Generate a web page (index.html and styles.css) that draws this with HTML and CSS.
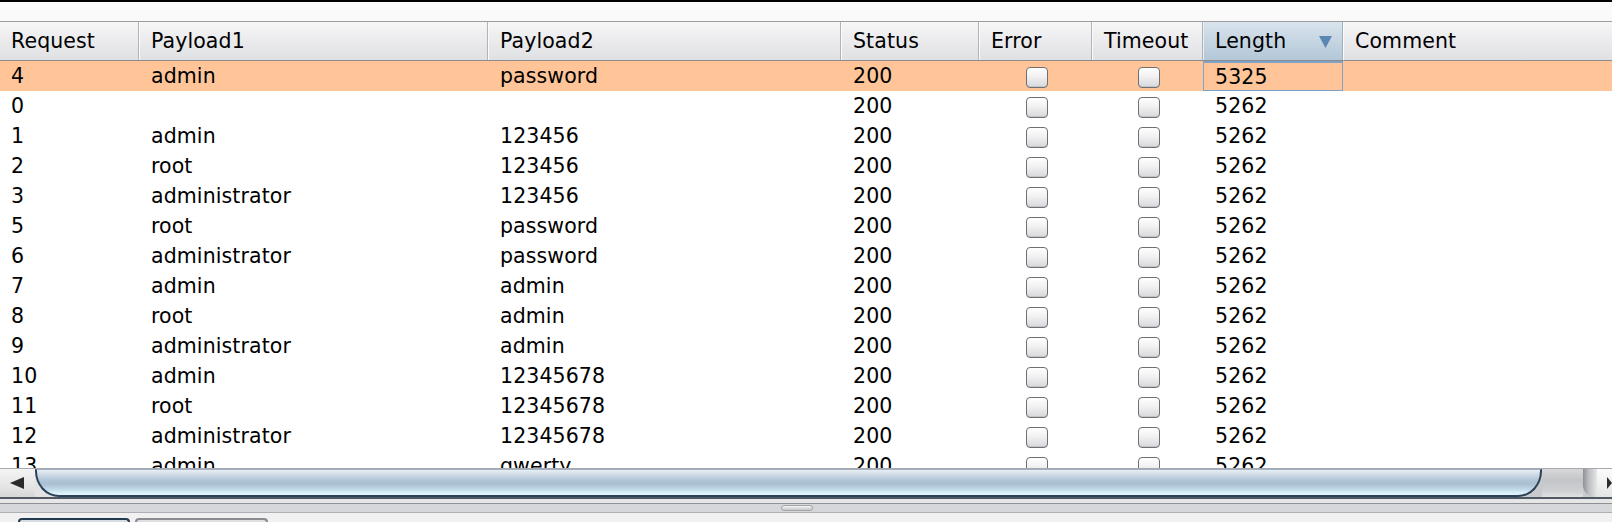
FILE: index.html
```html
<!DOCTYPE html>
<html>
<head>
<meta charset="utf-8">
<link rel="stylesheet" href="styles.css">
</head>
<body>
<div class="app">
  <div class="topbar"></div>
  <div class="topgap"></div>
  <div class="viewport">
    <div class="row head">
      <div class="hc">Request</div>
      <div class="hc">Payload1</div>
      <div class="hc">Payload2</div>
      <div class="hc">Status</div>
      <div class="hc">Error</div>
      <div class="hc">Timeout</div>
      <div class="hc sorted"><span>Length</span><svg class="sortarrow" width="13" height="12" viewBox="0 0 13 12"><polygon points="0,0 13,0 6.5,12" fill="#5b87b5"/></svg></div>
      <div class="hc last">Comment</div>
    </div>
    <div class="row data sel">
      <div class="c">4</div><div class="c">admin</div><div class="c">password</div><div class="c">200</div>
      <div class="c cb"><span class="box"></span></div><div class="c cb"><span class="box"></span></div>
      <div class="c focus">5325</div><div class="c"></div>
    </div>
    <div class="row data">
      <div class="c">0</div><div class="c"></div><div class="c"></div><div class="c">200</div>
      <div class="c cb"><span class="box"></span></div><div class="c cb"><span class="box"></span></div>
      <div class="c">5262</div><div class="c"></div>
    </div>
    <div class="row data">
      <div class="c">1</div><div class="c">admin</div><div class="c">123456</div><div class="c">200</div>
      <div class="c cb"><span class="box"></span></div><div class="c cb"><span class="box"></span></div>
      <div class="c">5262</div><div class="c"></div>
    </div>
    <div class="row data">
      <div class="c">2</div><div class="c">root</div><div class="c">123456</div><div class="c">200</div>
      <div class="c cb"><span class="box"></span></div><div class="c cb"><span class="box"></span></div>
      <div class="c">5262</div><div class="c"></div>
    </div>
    <div class="row data">
      <div class="c">3</div><div class="c">administrator</div><div class="c">123456</div><div class="c">200</div>
      <div class="c cb"><span class="box"></span></div><div class="c cb"><span class="box"></span></div>
      <div class="c">5262</div><div class="c"></div>
    </div>
    <div class="row data">
      <div class="c">5</div><div class="c">root</div><div class="c">password</div><div class="c">200</div>
      <div class="c cb"><span class="box"></span></div><div class="c cb"><span class="box"></span></div>
      <div class="c">5262</div><div class="c"></div>
    </div>
    <div class="row data">
      <div class="c">6</div><div class="c">administrator</div><div class="c">password</div><div class="c">200</div>
      <div class="c cb"><span class="box"></span></div><div class="c cb"><span class="box"></span></div>
      <div class="c">5262</div><div class="c"></div>
    </div>
    <div class="row data">
      <div class="c">7</div><div class="c">admin</div><div class="c">admin</div><div class="c">200</div>
      <div class="c cb"><span class="box"></span></div><div class="c cb"><span class="box"></span></div>
      <div class="c">5262</div><div class="c"></div>
    </div>
    <div class="row data">
      <div class="c">8</div><div class="c">root</div><div class="c">admin</div><div class="c">200</div>
      <div class="c cb"><span class="box"></span></div><div class="c cb"><span class="box"></span></div>
      <div class="c">5262</div><div class="c"></div>
    </div>
    <div class="row data">
      <div class="c">9</div><div class="c">administrator</div><div class="c">admin</div><div class="c">200</div>
      <div class="c cb"><span class="box"></span></div><div class="c cb"><span class="box"></span></div>
      <div class="c">5262</div><div class="c"></div>
    </div>
    <div class="row data">
      <div class="c">10</div><div class="c">admin</div><div class="c">12345678</div><div class="c">200</div>
      <div class="c cb"><span class="box"></span></div><div class="c cb"><span class="box"></span></div>
      <div class="c">5262</div><div class="c"></div>
    </div>
    <div class="row data">
      <div class="c">11</div><div class="c">root</div><div class="c">12345678</div><div class="c">200</div>
      <div class="c cb"><span class="box"></span></div><div class="c cb"><span class="box"></span></div>
      <div class="c">5262</div><div class="c"></div>
    </div>
    <div class="row data">
      <div class="c">12</div><div class="c">administrator</div><div class="c">12345678</div><div class="c">200</div>
      <div class="c cb"><span class="box"></span></div><div class="c cb"><span class="box"></span></div>
      <div class="c">5262</div><div class="c"></div>
    </div>
    <div class="row data">
      <div class="c">13</div><div class="c">admin</div><div class="c">qwerty</div><div class="c">200</div>
      <div class="c cb"><span class="box"></span></div><div class="c cb"><span class="box"></span></div>
      <div class="c">5262</div><div class="c"></div>
    </div>
  </div>
  <div class="hscroll">
    <div class="sb-left"><svg width="14" height="12" viewBox="0 0 14 12"><polygon points="14,0 14,12 0,6" fill="#2a2a2a"/></svg></div>
    <div class="sb-rail">
      <div class="sb-thumb"></div>
      <div class="sb-track"></div>
      <div class="sb-cap"></div>
    </div>
    <div class="sb-right"><svg width="15" height="12" viewBox="0 0 15 12"><polygon points="10,0 10,12 15,6" fill="#2a2a2a"/></svg></div>
  </div>
  <div class="darkline"></div>
  <div class="lightstrip"></div>
  <div class="splitter"><span class="grip"></span></div>
  <div class="bottom">
    <span class="tab tab-active"></span>
    <span class="tab"></span>
  </div>
</div>
</body>
</html>
```
FILE: styles.css
```css
html, body {
  margin: 0;
  padding: 0;
  background: #ffffff;
}
.app {
  width: 1612px;
  height: 522px;
  overflow: hidden;
  display: flex;
  flex-direction: column;
  font-family: "DejaVu Sans", Verdana, sans-serif;
  font-size: 20.5px;
  letter-spacing: 0.1px;
  color: #000;
}
.topbar {
  height: 2px;
  background: #000;
  flex: none;
}
.topgap {
  height: 19px;
  background: #fafafa;
  flex: none;
}
.viewport {
  height: 447px;
  flex: none;
  overflow: hidden;
  background: #fff;
}
.row {
  display: grid;
  grid-template-columns: 139px 349px 353px 138px 113px 111px 140px 1fr;
}
.head {
  height: 40px;
  box-sizing: border-box;
  border-top: 1px solid #9d9d9f;
  border-bottom: 1px solid #8c8c8e;
  background: linear-gradient(#f6f6f7 0%, #ebebed 50%, #dfe0e3 100%);
}
.hc {
  line-height: 38px;
  padding-left: 12px;
  border-right: 1px solid #b3b3b6;
  box-shadow: inset 1px 0 0 #fbfbfb;
  white-space: nowrap;
}
.hc:first-child {
  padding-left: 11px;
  box-shadow: none;
}
.hc.last {
  border-right: none;
}
.hc.sorted {
  display: flex;
  align-items: center;
  justify-content: space-between;
  padding-right: 10px;
  background: linear-gradient(#d9e4ed 0%, #c5d5e2 50%, #b3c7d7 100%);
  box-shadow: inset 1px 0 0 #e6eef4;
  border-right: 1px solid #9fb0bf;
}
.sortarrow {
  display: block;
  margin-top: 1px;
}
.data {
  height: 30px;
}
.sel {
  background: #ffc599;
}
.c {
  line-height: 30px;
  padding-left: 12px;
  white-space: nowrap;
  overflow: hidden;
}
.c:first-child {
  padding-left: 11px;
}
.c.cb {
  padding-left: 0;
  display: flex;
  align-items: center;
  justify-content: center;
}
.box {
  display: block;
  width: 20px;
  height: 19px;
  margin-left: 3px;
  margin-top: 2px;
  border: 1.5px solid #6f7073;
  border-radius: 4px;
  background: linear-gradient(#ffffff 0%, #f1f1f2 45%, #d7d8db 100%);
  box-shadow: inset 0 -1px 0 #c4c5c8;
}
.c.focus {
  box-sizing: border-box;
  padding-left: 11px;
  line-height: 28px;
  border: 1.5px solid #7ea3cb;
  border-top-width: 2px;
}
.hscroll {
  height: 29px;
  flex: none;
  display: flex;
  box-sizing: border-box;
  border-top: 1px solid #a7a8ab;
  background: linear-gradient(#f2f2f2, #dcdcdd);
}
.sb-left {
  width: 35px;
  flex: none;
  display: flex;
  align-items: center;
  padding-left: 10px;
  box-sizing: border-box;
  background: linear-gradient(#f4f4f4 0%, #e6e6e7 60%, #d6d6d8 100%);
}
.sb-rail {
  flex: 1;
  display: flex;
  background: linear-gradient(to right, #e3e3e4 0 30px, #c9cacd 30px);
}
.sb-thumb {
  flex: 1;
  box-sizing: border-box;
  border: 2px solid #2c4258;
  border-top: 1px solid #9fb0c0;
  border-radius: 0 0 24px 24px / 0 0 26px 26px;
  background: linear-gradient(#e8eef4 0%, #cfdbe6 18%, #b2c6d7 40%, #a9bfd2 55%, #bed6e5 75%, #dbf1fa 92%, #e4f6fc 100%);
}
.sb-track {
  width: 41px;
  flex: none;
  background: linear-gradient(#d8d8da 0%, #c4c5c8 40%, #cfd0d3 80%, #e2e2e4 100%);
}
.sb-cap {
  width: 14px;
  flex: none;
  border-radius: 0 0 0 12px;
  background: linear-gradient(to right, #8e8f93 0%, #bdbec1 40%, #e6e6e7 100%);
}
.sb-right {
  width: 15px;
  flex: none;
  display: flex;
  align-items: center;
  background: linear-gradient(#fbfbfb, #e4e4e5);
}
.darkline {
  height: 2px;
  flex: none;
  background: #4e5964;
}
.lightstrip {
  height: 4px;
  flex: none;
  background: #e6e6e7;
}
.splitter {
  height: 10px;
  flex: none;
  box-sizing: border-box;
  border-top: 1px solid #8f9096;
  border-bottom: 1px solid #aeafb3;
  background: #d6d7db;
  display: flex;
  justify-content: center;
  align-items: center;
}
.grip {
  display: block;
  width: 32px;
  height: 6px;
  margin-left: -18px;
  border-radius: 4px;
  background: linear-gradient(#f4f4f5, #c6c7cb);
  border: 1px solid #a3a4a8;
  box-sizing: border-box;
}
.bottom {
  flex: 1;
  background: #f1f1f1;
  display: flex;
  align-items: flex-end;
  gap: 5px;
  padding-left: 18px;
}
.tab {
  display: block;
  width: 133px;
  height: 4px;
  box-sizing: border-box;
  border: 2px solid #8a8b8f;
  border-bottom: none;
  border-radius: 6px 6px 0 0;
  background: #e0e0e2;
}
.tab-active {
  width: 112px;
  border-color: #243a4f;
  background: #d8dde3;
}
```
